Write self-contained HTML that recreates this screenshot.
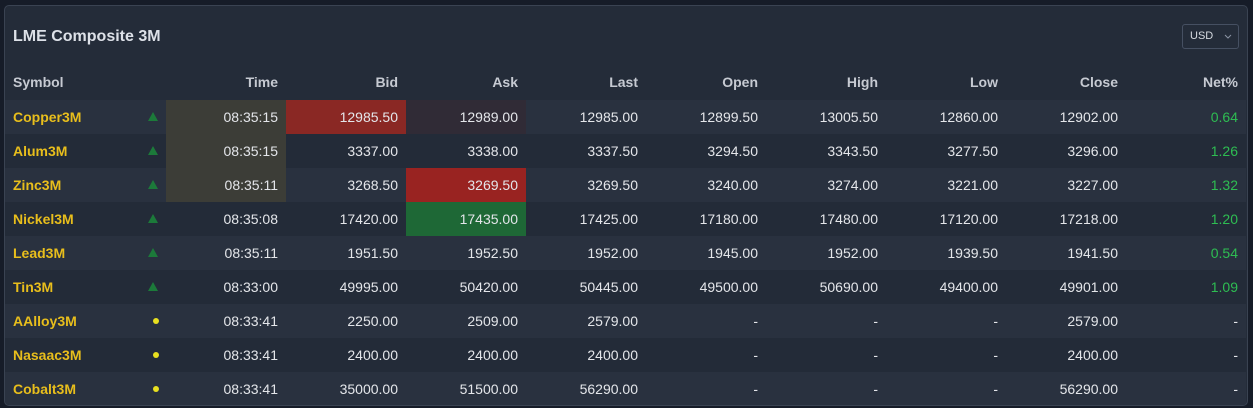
<!DOCTYPE html>
<html><head><style>
*{margin:0;padding:0;box-sizing:border-box}
body{width:1253px;height:408px;background:#161c28;font-family:"Liberation Sans",sans-serif;overflow:hidden;position:relative}
.card{position:absolute;left:4px;top:5px;width:1244px;height:401px;background:#242c39;border:1px solid #3a4352;border-radius:5px;overflow:hidden}
.title{position:absolute;left:8px;top:22px;font-size:16px;font-weight:bold;color:#dde1e8}
.usd{position:absolute;left:1177px;top:18px;width:57px;height:25px;border:1px solid #465062;border-radius:3px;color:#d6dae0;font-size:11px;line-height:23px;padding-left:7px}
.usd svg{position:absolute;left:41px;top:9px}
table{position:absolute;left:-1px;top:62px;border-collapse:collapse;table-layout:fixed}
td,th{height:34px;width:120px;text-align:right;padding-right:8px;font-size:14px;color:#e4e6ea;white-space:nowrap}
th{color:#c6cad2;font-weight:bold;height:32px;padding-bottom:4px}
td.s,th.s{width:162px;text-align:left;padding-left:9px;position:relative}
td.s{color:#e8be1c;font-weight:bold}
tr.o td{background:#29313f}
tr.e td{background:#232b38}
.tri{position:absolute;left:144px;top:12px;width:0;height:0;border-left:5px solid transparent;border-right:5px solid transparent;border-bottom:9px solid #1c7a3a}
.dot{position:absolute;left:149px;top:14px;width:6px;height:6px;border-radius:50%;background:#e8e020}
.g{color:#2ebd52!important}
tr td.ht{background:#3c3d37}
tr td.rb{background:#8a2824}
tr td.da{background:#302b36}
tr td.ra{background:#992321}
tr td.ga{background:#1e6836}
</style></head><body>
<div class="card">
<div class="title">LME Composite 3M</div>
<div class="usd">USD<svg width="8" height="5" viewBox="0 0 8 5"><path d="M1 1l3 3 3-3" stroke="#8a93a3" fill="none" stroke-width="1"/></svg></div>
<table>
<tr><th class="s">Symbol</th><th>Time</th><th>Bid</th><th>Ask</th><th>Last</th><th>Open</th><th>High</th><th>Low</th><th>Close</th><th>Net%</th></tr>
<tr class="o"><td class="s">Copper3M<span class="tri"></span></td><td class="ht">08:35:15</td><td class="rb">12985.50</td><td class="da">12989.00</td><td>12985.00</td><td>12899.50</td><td>13005.50</td><td>12860.00</td><td>12902.00</td><td class="g">0.64</td></tr>
<tr class="e"><td class="s">Alum3M<span class="tri"></span></td><td class="ht">08:35:15</td><td>3337.00</td><td>3338.00</td><td>3337.50</td><td>3294.50</td><td>3343.50</td><td>3277.50</td><td>3296.00</td><td class="g">1.26</td></tr>
<tr class="o"><td class="s">Zinc3M<span class="tri"></span></td><td class="ht">08:35:11</td><td>3268.50</td><td class="ra">3269.50</td><td>3269.50</td><td>3240.00</td><td>3274.00</td><td>3221.00</td><td>3227.00</td><td class="g">1.32</td></tr>
<tr class="e"><td class="s">Nickel3M<span class="tri"></span></td><td>08:35:08</td><td>17420.00</td><td class="ga">17435.00</td><td>17425.00</td><td>17180.00</td><td>17480.00</td><td>17120.00</td><td>17218.00</td><td class="g">1.20</td></tr>
<tr class="o"><td class="s">Lead3M<span class="tri"></span></td><td>08:35:11</td><td>1951.50</td><td>1952.50</td><td>1952.00</td><td>1945.00</td><td>1952.00</td><td>1939.50</td><td>1941.50</td><td class="g">0.54</td></tr>
<tr class="e"><td class="s">Tin3M<span class="tri"></span></td><td>08:33:00</td><td>49995.00</td><td>50420.00</td><td>50445.00</td><td>49500.00</td><td>50690.00</td><td>49400.00</td><td>49901.00</td><td class="g">1.09</td></tr>
<tr class="o"><td class="s">AAlloy3M<span class="dot"></span></td><td>08:33:41</td><td>2250.00</td><td>2509.00</td><td>2579.00</td><td>-</td><td>-</td><td>-</td><td>2579.00</td><td>-</td></tr>
<tr class="e"><td class="s">Nasaac3M<span class="dot"></span></td><td>08:33:41</td><td>2400.00</td><td>2400.00</td><td>2400.00</td><td>-</td><td>-</td><td>-</td><td>2400.00</td><td>-</td></tr>
<tr class="o"><td class="s">Cobalt3M<span class="dot"></span></td><td>08:33:41</td><td>35000.00</td><td>51500.00</td><td>56290.00</td><td>-</td><td>-</td><td>-</td><td>56290.00</td><td>-</td></tr>
</table>
</div>
</body></html>
